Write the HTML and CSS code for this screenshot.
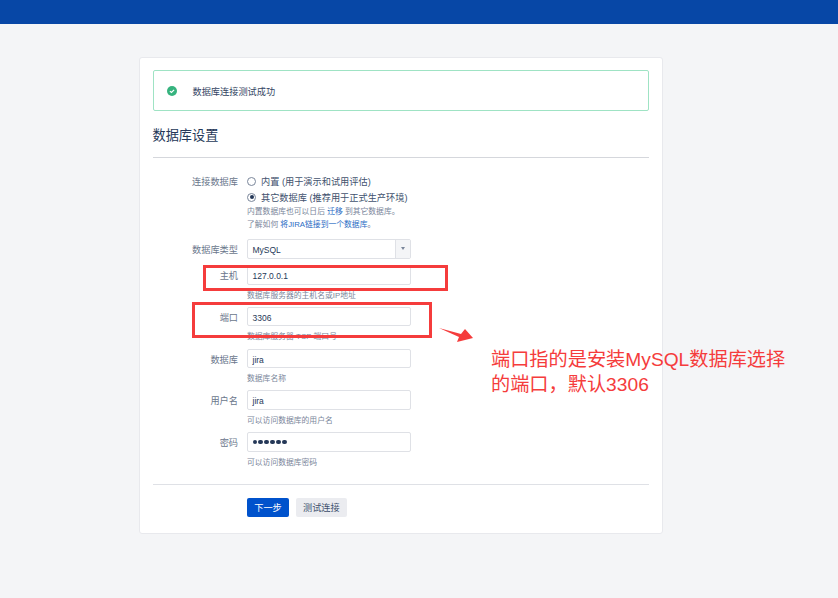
FILE: index.html
```html
<!DOCTYPE html>
<html lang="zh">
<head>
<meta charset="utf-8">
<title>数据库设置</title>
<link rel="stylesheet" href="styles.css">
</head>
<body>
<header class="topbar"></header>
<main class="card">
  <div class="alert">
    <svg class="check" viewBox="0 0 10 10" width="10" height="10"><circle cx="5" cy="5" r="5" fill="#36b37e"/><path d="M2.9 5.1 4.4 6.5 7.1 3.8" fill="none" stroke="#fff" stroke-width="1.2"/></svg>
    <span>数据库连接测试成功</span>
  </div>
  <h1 class="title">数据库设置</h1>
  <form class="form">
    <div class="field radios">
      <div class="label">连接数据库</div>
      <div class="control">
        <div class="radio-row"><span class="radio"></span>内置 (用于演示和试用评估)</div>
        <div class="radio-row"><span class="radio on"></span>其它数据库 (推荐用于正式生产环境)</div>
        <div class="help">内置数据库也可以日后 <a>迁移</a> 到其它数据库。</div>
        <div class="help">了解如何 <a>将JIRA链接到一个数据库</a>。</div>
      </div>
    </div>
    <div class="field select-field">
      <div class="label">数据库类型</div>
      <div class="control">
        <div class="select"><span class="select-value">MySQL</span><span class="select-btn"><i class="caret"></i></span></div>
      </div>
    </div>
    <div class="field">
      <div class="label">主机</div>
      <div class="control"><div class="input">127.0.0.1</div><div class="help">数据库服务器的主机名或IP地址</div></div>
    </div>
    <div class="field">
      <div class="label">端口</div>
      <div class="control"><div class="input">3306</div><div class="help">数据库服务器 TCP 端口号</div></div>
    </div>
    <div class="field">
      <div class="label">数据库</div>
      <div class="control"><div class="input">jira</div><div class="help">数据库名称</div></div>
    </div>
    <div class="field">
      <div class="label">用户名</div>
      <div class="control"><div class="input">jira</div><div class="help">可以访问数据库的用户名</div></div>
    </div>
    <div class="field">
      <div class="label">密码</div>
      <div class="control"><div class="input dots"><i></i><i></i><i></i><i></i><i></i><i></i></div><div class="help">可以访问数据库密码</div></div>
    </div>
    <div class="actions">
      <button type="button" class="btn primary">下一步</button>
      <button type="button" class="btn">测试连接</button>
    </div>
  </form>
</main>
<div class="mark mark-host"></div>
<div class="mark mark-port"></div>
<svg class="arrow" viewBox="0 0 36 18" width="36" height="18"><path d="M0 1 L22 7 L26 2 L34 11 L18 15 L20 10 Z" fill="#f53c3c"/></svg>
<p class="note">端口指的是安装MySQL数据库选择<br>的端口，默认3306</p>
</body>
</html>
```
FILE: styles.css
```css
* { box-sizing: border-box; }
html, body { margin: 0; padding: 0; }
body {
  position: relative;
  height: 598px;
  overflow: hidden;
  background: #f4f5f7;
  color: #172b4d;
  font-family: "Liberation Sans", "Noto Sans CJK SC", sans-serif;
  font-size: 9.2px;
}
.topbar { height: 24px; background: #0747a6; }
.card {
  width: 523.5px;
  height: 477px;
  margin: 33px 0 0 139px;
  padding: 12px 13px 0 12.5px;
  background: #fff;
  border: 1px solid #e8e9ed;
  border-radius: 3px;
}
.alert {
  display: flex;
  align-items: center;
  height: 41px;
  padding-left: 13px;
  border: 1px solid #9fe3c4;
  border-radius: 2px;
  color: #344563;
}
.check { margin-right: 16px; }
.title {
  margin: 0;
  padding: 16px 0 11px;
  height: 47px;
  border-bottom: 1px solid #d5d7dc;
  font-size: 13.2px;
  line-height: 18px;
  font-weight: 400;
  color: #253858;
}
.form { display: flex; flex-direction: column; }
.field { display: flex; height: 41.7px; }
.radios { height: 81px; padding-top: 15px; }
.select-field { height: 26.3px; }
.label {
  width: 85.5px;
  margin-right: 9px;
  line-height: 22px;
  text-align: right;
  color: #6b778c;
}
.radios .label { line-height: 19px; }
.control { width: 164px; flex: none; }
.radio-row {
  display: flex;
  align-items: center;
  height: 16px;
  white-space: nowrap;
  color: #42526e;
}
.radio {
  position: relative;
  width: 9px;
  height: 9px;
  margin-right: 5px;
  border: 1px solid #7a869a;
  border-radius: 50%;
  background: #fff;
}
.radio.on::after {
  content: "";
  position: absolute;
  inset: 1.5px;
  border-radius: 50%;
  background: #253858;
}
.help {
  height: 13px;
  font-size: 7.8px;
  line-height: 13px;
  white-space: nowrap;
  color: #7a869a;
}
.help a { color: #2b6cc4; }
.input + .help { margin-top: 4px; }
.input, .select {
  height: 19.5px;
  border: 1px solid #dfe1e6;
  border-radius: 2px;
  background: #fff;
  font-size: 8.5px;
  line-height: 21px;
  color: #253858;
}
.input { padding-left: 4.5px; }
.dots { display: flex; align-items: center; gap: 1.4px; }
.dots i { width: 4.6px; height: 4.6px; border-radius: 50%; background: #253858; }
.select { display: flex; justify-content: space-between; }
.select-value { padding-left: 4.5px; }
.select-btn {
  display: flex;
  align-items: center;
  justify-content: center;
  width: 15px;
  border-left: 1px solid #dfe1e6;
  background: #f4f5f7;
}
.caret {
  border-left: 2.5px solid transparent;
  border-right: 2.5px solid transparent;
  border-top: 3px solid #7a869a;
}
.actions {
  display: flex;
  gap: 7px;
  align-items: flex-start;
  height: 49px;
  margin-top: 10px;
  padding: 13px 0 0 94.5px;
  border-top: 1px solid #dfe1e6;
}
.btn {
  height: 19.5px;
  padding: 0 7px;
  border: 0;
  border-radius: 2px;
  background: #ebecf0;
  color: #42526e;
  font: 9.2px "Liberation Sans", "Noto Sans CJK SC", sans-serif;
}
.primary { width: 42px; background: #0052cc; color: #fff; }
.mark {
  position: absolute;
  border: 3px solid #f53c3c;
}
.mark-host { left: 203px; top: 265px; width: 245px; height: 26px; }
.mark-port { left: 192px; top: 302px; width: 240px; height: 36px; }
.arrow { position: absolute; left: 439px; top: 327px; }
.note {
  position: absolute;
  left: 491px;
  top: 347px;
  margin: 0;
  font-size: 19.2px;
  line-height: 25px;
  white-space: nowrap;
  color: #f53c3c;
}
```
